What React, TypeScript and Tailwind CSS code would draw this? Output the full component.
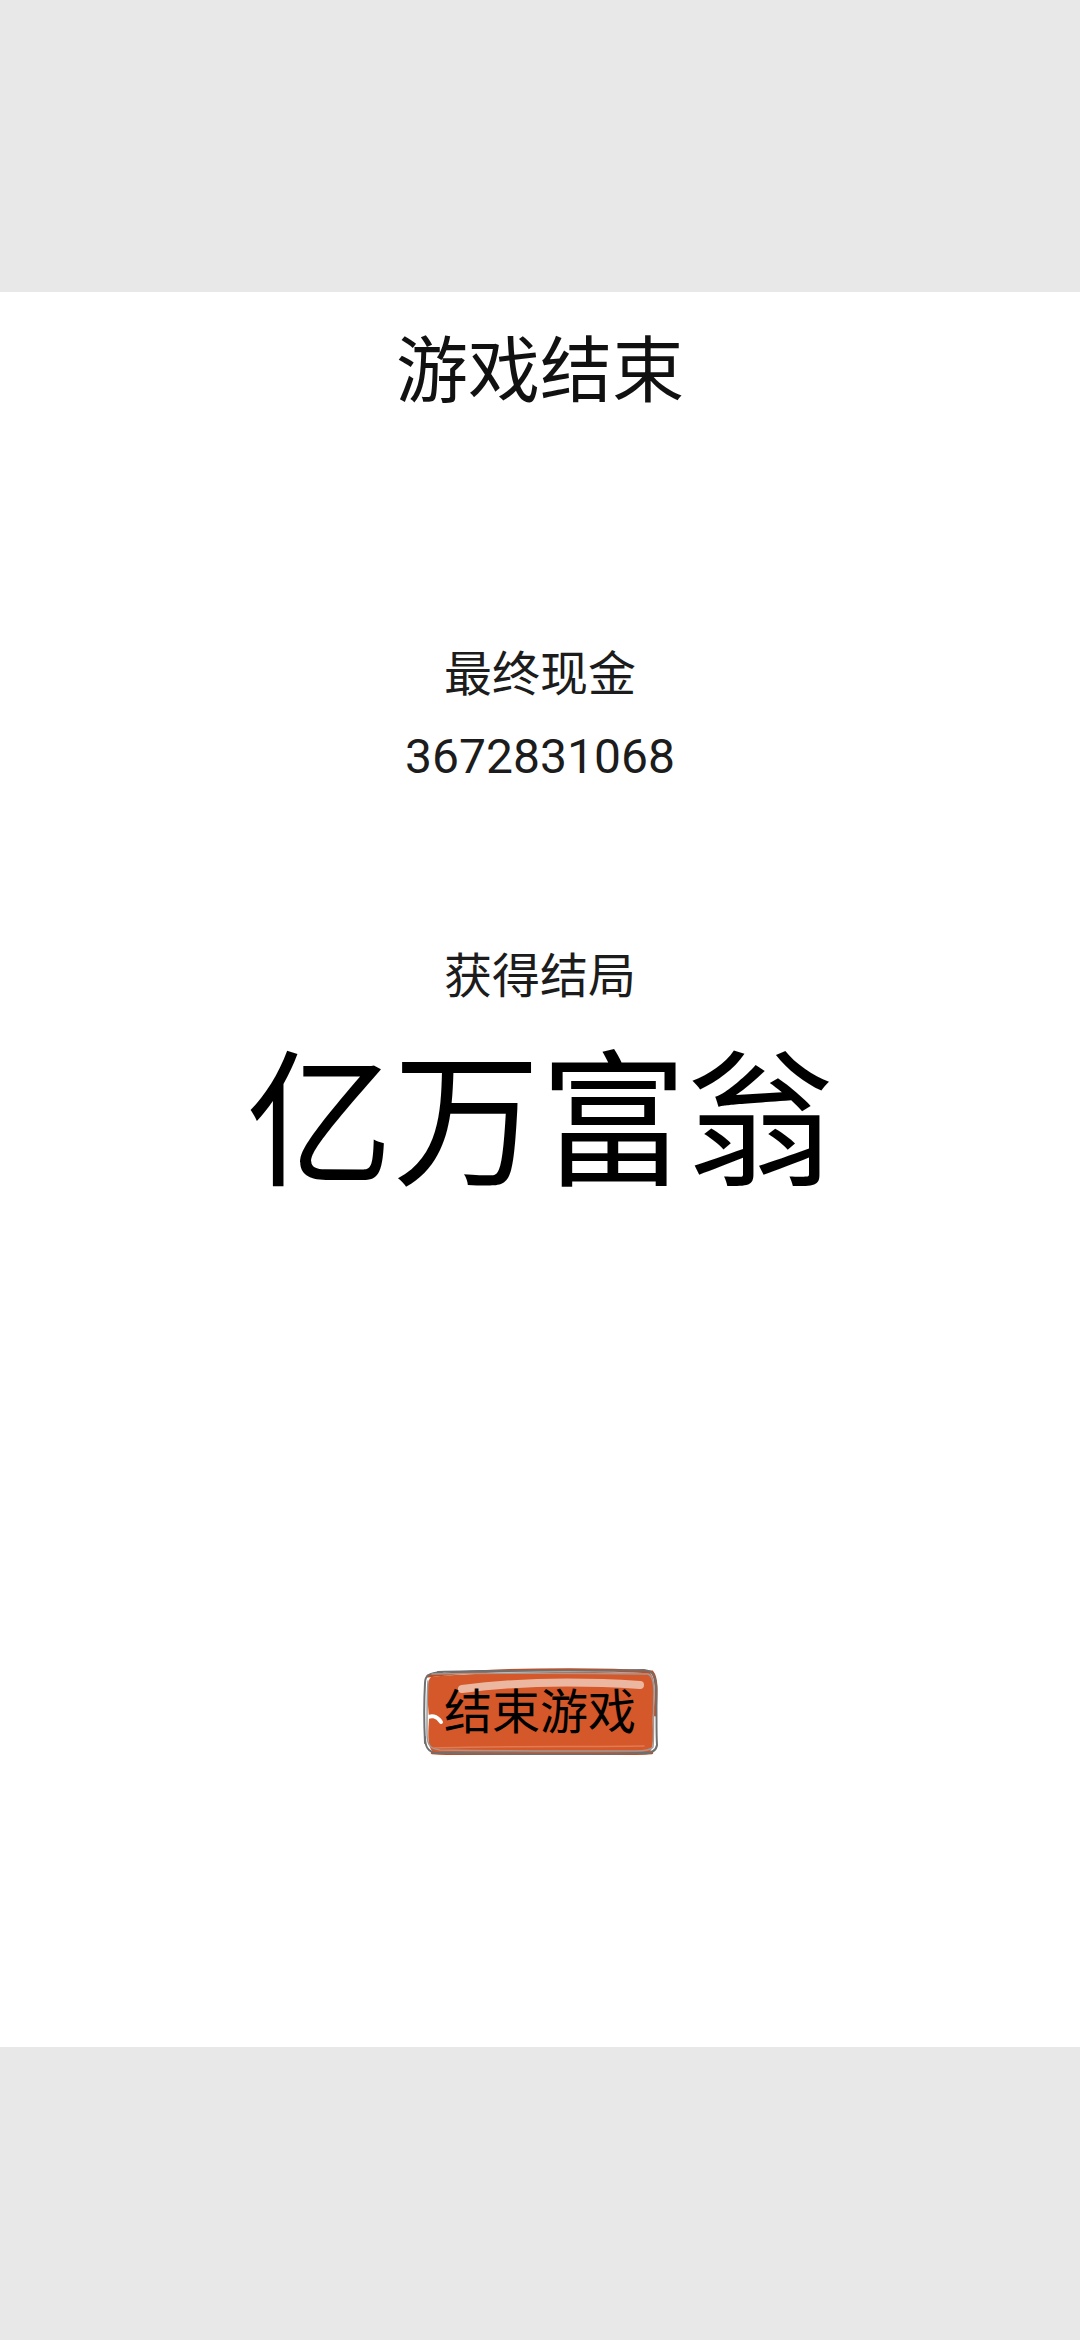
import React from "react";

function SketchButton() {
  return (
    <div className="relative mt-[484px] flex h-[88px] w-[236px] items-start justify-center">
      <svg
        className="absolute inset-0"
        width="236"
        height="88"
        viewBox="0 0 236 88"
        fill="none"
      >
        {/* orange fill, hand-drawn */}
        <path
          d="M9 10 C 50 5, 150 4, 228 6 C 234 12, 232 26, 231 46 C 230 66, 234 80, 226 87 C 150 89, 70 88, 12 86 C 5 80, 6 68, 7 52 C 6 34, 3 16, 9 10 Z"
          fill="#d4582a"
        />
        <path
          d="M6 9 C 60 2, 170 1, 230 5 C 236 12, 234 30, 233 48"
          stroke="#c24c20"
          strokeWidth="3"
          strokeLinecap="round"
        />
        <path
          d="M10 86 C 80 90, 170 89, 230 86"
          stroke="#c24c20"
          strokeWidth="2.5"
          strokeLinecap="round"
        />
        <path
          d="M12 81 C 80 79, 160 80, 222 79"
          stroke="#e27a52"
          strokeWidth="1.5"
          strokeLinecap="round"
        />
        <path
          d="M40 22 C 100 14, 170 15, 218 18"
          stroke="#ecb7a1"
          strokeWidth="8"
          strokeLinecap="round"
        />
        <path
          d="M3 52 C 9 47, 15 49, 19 55"
          stroke="#ffffff"
          strokeWidth="4"
          strokeLinecap="round"
        />
        {/* gray sketchy outline, overshooting strokes */}
        <path
          d="M16 5 C 80 3, 160 4, 222 3 C 232 4, 234 10, 234 22"
          stroke="#6f6f6f"
          strokeWidth="2"
          strokeLinecap="round"
        />
        <path
          d="M234 16 C 235 40, 234 64, 235 78 C 234 85, 228 87, 218 86"
          stroke="#6f6f6f"
          strokeWidth="2"
          strokeLinecap="round"
        />
        <path
          d="M226 86 C 160 88, 80 87, 14 86 C 6 85, 3 80, 3 70"
          stroke="#6f6f6f"
          strokeWidth="2"
          strokeLinecap="round"
        />
        <path
          d="M3 76 C 2 56, 2 34, 3 16 C 3 9, 6 6, 20 5"
          stroke="#6f6f6f"
          strokeWidth="2"
          strokeLinecap="round"
        />
        <path
          d="M10 7 C 70 6, 150 6, 226 7 C 231 9, 232 16, 232 26 C 231 50, 232 70, 231 80 C 228 84, 220 84, 214 84 C 150 84, 80 84, 18 83 C 8 82, 5 78, 5 66 C 5 46, 5 28, 6 14"
          stroke="#9b9b9b"
          strokeWidth="1.5"
          strokeLinecap="round"
        />
      </svg>
      <span className="relative mt-[17px] font-['Noto_Sans_CJK_SC','Noto_Sans',sans-serif] text-[48px] leading-[48px] text-black">
        结束游戏
      </span>
    </div>
  );
}

export default function App() {
  return (
    <div className="flex min-h-[2340px] w-[1080px] flex-col bg-[#e8e8e8]">
      <div className="mt-[292px] flex h-[1755px] w-full flex-col items-center bg-white font-['Noto_Sans_CJK_SC','Noto_Sans',sans-serif]">
        <div className="mt-[37px] text-[72px] leading-[72px] text-[#111111]">
          游戏结束
        </div>
        <div className="mt-[245px] text-[48px] leading-[48px] text-[#1c1c1c]">
          最终现金
        </div>
        <div className="mt-[39px] font-['Roboto','Noto_Sans_CJK_SC',sans-serif] text-[48px] leading-[48px] text-[#1c1c1c]">
          3672831068
        </div>
        <div className="mt-[167px] text-[48px] leading-[48px] text-[#1c1c1c]">
          获得结局
        </div>
        <div className="mt-[40px] text-[147px] leading-[147px] text-black">
          亿万富翁
        </div>
        <SketchButton />
      </div>
    </div>
  );
}
